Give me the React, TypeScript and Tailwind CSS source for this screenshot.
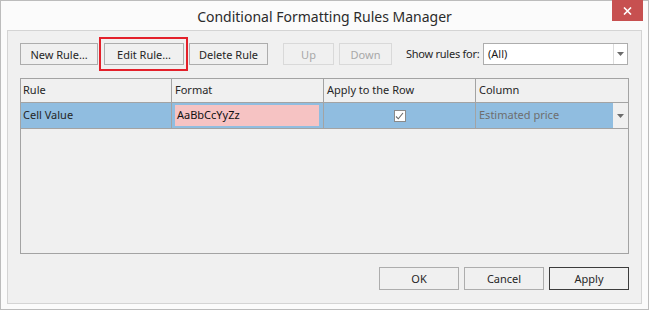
import React from 'react';

const font = { fontFamily: '"Noto Sans", "Open Sans", sans-serif' };

function Btn({ label, w, disabled, strong }: { label: string; w: string; disabled?: boolean; strong?: boolean }) {
  return (
    <div
      className={`${w} shrink-0 whitespace-nowrap flex items-center justify-center border text-[11px] leading-none bg-[#f0f0f0] ${
        disabled ? 'border-[#d9d9d9] text-[#a8a8a8]' : strong ? 'border-[#3c3c3c] text-[#262626]' : 'border-[#adadad] text-[#262626]'
      }`}
    >
      {label}
    </div>
  );
}

function Arrow() {
  return (
    <svg width="7" height="4" viewBox="0 0 7 4">
      <path d="M0 0h7L3.5 4z" fill="#6b6b6b" />
    </svg>
  );
}

export default function App() {
  return (
    <div className="w-[649px] h-[310px] bg-[#fbfbfb] border border-[#bcbcbc] flex flex-col" style={font}>
      <div className="h-[29px] shrink-0 relative flex items-center justify-center">
        <span className="text-[14px] text-[#2b2b2b] pt-[1px] whitespace-nowrap">Conditional Formatting Rules Manager</span>
        <div className="absolute right-[5px] top-[-1px] w-[31px] h-[21px] bg-[#c75050] flex items-center justify-center">
          <svg width="9" height="8" viewBox="0 0 9 8">
            <path d="M1 0.5l7 7M8 0.5l-7 7" stroke="#fff" strokeWidth="1.6" />
          </svg>
        </div>
      </div>

      <div className="mx-[6px] h-[274px] shrink-0 border border-[#d4d4d4] bg-[#f0f0f0] pt-[12px] px-[12px] relative">
        <div className="flex items-center h-[22px]">
          <Btn label="New Rule…" w="w-[78px] h-[22px]" />
          <div className="ml-[6px]">
            <Btn label="Edit Rule…" w="w-[80px] h-[22px]" />
          </div>
          <div className="ml-[5px]">
            <Btn label="Delete Rule" w="w-[79px] h-[22px]" />
          </div>
          <div className="ml-[15px]">
            <Btn label="Up" w="w-[51px] h-[22px]" disabled />
          </div>
          <div className="ml-[5px]">
            <Btn label="Down" w="w-[53px] h-[22px]" disabled />
          </div>
          <span className="ml-[14px] w-[72px] shrink-0 whitespace-nowrap text-[11px] tracking-[-0.25px] text-[#262626]">Show rules for:</span>
          <div className="ml-[5px] w-[145px] shrink-0 h-[22px] border border-[#adadad] bg-white flex items-center">
            <span className="flex-1 pl-[4px] text-[11px] text-[#1a1a1a]">(All)</span>
            <div className="w-[14px] h-full border-l border-[#dcdcdc] flex items-center justify-center">
              <Arrow />
            </div>
          </div>
        </div>

        <div className="absolute left-[91px] top-[6px] w-[89px] h-[34px] border-2 border-[#e3202a]" />

        <div className="mt-[13px] w-[609px] h-[176px] border border-[#a3a3a3] bg-[#f0f0f0] text-[11px] whitespace-nowrap">
          <div className="grid grid-cols-[151px_152px_152px_152px] h-[24px] border-b border-[#a3a3a3] text-[#262626]">
            <div className="border-r border-[#a3a3a3] pl-[2px] flex items-center">Rule</div>
            <div className="border-r border-[#a3a3a3] pl-[3px] flex items-center">Format</div>
            <div className="border-r border-[#a3a3a3] pl-[3px] flex items-center">Apply to the Row</div>
            <div className="pl-[3px] flex items-center">Column</div>
          </div>
          <div className="grid grid-cols-[151px_152px_152px_152px] h-[26px] border-b border-[#a3a3a3] bg-[#90bde0]">
            <div className="border-r border-[#a3a3a3] pl-[2px] flex items-center text-[#262626]">Cell Value</div>
            <div className="border-r border-[#a3a3a3] py-[2px] pl-[3px] pr-[4px] flex">
              <div className="flex-1 bg-[#f6c3c3] flex items-center pl-[2px] text-[#111]">AaBbCcYyZz</div>
            </div>
            <div className="border-r border-[#a3a3a3] flex items-center justify-center">
              <div className="w-[12px] h-[12px] bg-white border border-[#8a8a8a] flex items-center justify-center">
                <svg width="9" height="8" viewBox="0 0 9 8">
                  <path d="M1 4.5l2.3 2.3L8 1" stroke="#6a6a6a" strokeWidth="1.1" fill="none" />
                </svg>
              </div>
            </div>
            <div className="flex">
              <div className="flex-1 pl-[3px] flex items-center text-[#6e6e6e]">Estimated price</div>
              <div className="w-[15px] bg-[#f0f0f0] flex items-center justify-center">
                <Arrow />
              </div>
            </div>
          </div>
        </div>

        <div className="mt-[13px] flex justify-end gap-[5px]">
          <Btn label="OK" w="w-[80px] h-[23px]" />
          <Btn label="Cancel" w="w-[80px] h-[23px]" />
          <Btn label="Apply" w="w-[80px] h-[23px]" strong />
        </div>
      </div>
    </div>
  );
}
